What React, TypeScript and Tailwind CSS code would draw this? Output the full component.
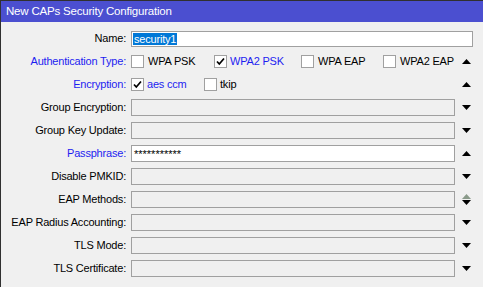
import React from "react";

const font = { fontFamily: '"Liberation Sans", Arial, sans-serif' };

function Up({ grey = false }: { grey?: boolean }) {
  return (
    <svg width="9" height="5" viewBox="0 0 9 5" className="block">
      <polygon points="0,5 9,5 4.5,0" fill={grey ? "#8a9a8a" : "#000"} />
    </svg>
  );
}
function Down() {
  return (
    <svg width="9" height="5" viewBox="0 0 9 5" className="block">
      <polygon points="0,0 9,0 4.5,5" fill="#000" />
    </svg>
  );
}

function Check({ checked }: { checked?: boolean }) {
  return (
    <span className="w-[13px] h-[13px] bg-white border border-[#a0a0a0] flex items-center justify-center shrink-0">
      {checked && (
        <svg width="11" height="11" viewBox="0 0 11 11">
          <path d="M2 5.5 L4.3 8 L9 2.5" stroke="#000" strokeWidth="1.7" fill="none" />
        </svg>
      )}
    </span>
  );
}

function Label({ text, blue }: { text: string; blue?: boolean }) {
  return (
    <div
      className={`w-[126px] shrink-0 text-right pr-[1px] whitespace-nowrap ${blue ? "text-[#1e1ef0]" : "text-black"}`}
    >
      {text}
    </div>
  );
}

function Row({ children }: { children: React.ReactNode }) {
  return <div className="h-[23px] flex items-center">{children}</div>;
}

function Arrow({ kind }: { kind: "up" | "down" | "both" }) {
  return (
    <div className="w-[22px] flex flex-col items-center justify-center">
      {kind === "up" && <Up />}
      {kind === "down" && <Down />}
      {kind === "both" && (
        <div className="flex flex-col gap-[1px]">
          <Up grey />
          <Down />
        </div>
      )}
    </div>
  );
}

function Box({ white, children }: { white?: boolean; children?: React.ReactNode }) {
  return (
    <div
      className={`ml-[4px] w-[324px] h-[17px] border border-[#a0a0a0] flex items-center px-[2px] ${white ? "bg-white" : "bg-[#f0f0f0]"}`}
    >
      {children}
    </div>
  );
}

function FieldRow({ label, blue, arrow, white, children }: { label: string; blue?: boolean; arrow: "up" | "down" | "both"; white?: boolean; children?: React.ReactNode }) {
  return (
    <Row>
      <Label text={label} blue={blue} />
      <Box white={white}>{children}</Box>
      <Arrow kind={arrow} />
    </Row>
  );
}

export default function App() {
  return (
    <div
      className="w-[483px] h-[287px] bg-[#f0f0f0] border-l border-t border-[#303030] text-[11px] tracking-[-0.2px] overflow-hidden"
      style={font}
    >
      <div className="h-[21px] bg-[#4b4fd0] text-white text-[11.5px] flex items-center pl-[5px]">
        New CAPs Security Configuration
      </div>
      <div className="pt-[5px]">
        <Row>
          <Label text="Name:" />
          <div className="ml-[4px] w-[342px] h-[16px] border border-[#a0a0a0] bg-white flex items-center px-[1px]">
            <span className="bg-[#0078d7] text-white leading-[12px] h-[12px] px-[1px]">security1</span>
          </div>
        </Row>
        <Row>
          <Label text="Authentication Type:" blue />
          <div className="ml-[4px] w-[324px] flex items-center">
            <div className="flex items-center w-[83px]">
              <Check />
              <span className="ml-[4px]">WPA PSK</span>
            </div>
            <div className="flex items-center w-[87px]">
              <Check checked />
              <span className="ml-[3px] text-[#1e1ef0]">WPA2 PSK</span>
            </div>
            <div className="flex items-center w-[82px]">
              <Check />
              <span className="ml-[4px]">WPA EAP</span>
            </div>
            <div className="flex items-center">
              <Check />
              <span className="ml-[4px]">WPA2 EAP</span>
            </div>
          </div>
          <Arrow kind="up" />
        </Row>
        <Row>
          <Label text="Encryption:" blue />
          <div className="ml-[4px] w-[324px] flex items-center">
            <div className="flex items-center w-[73px]">
              <Check checked />
              <span className="ml-[3px] text-[#1e1ef0]">aes ccm</span>
            </div>
            <div className="flex items-center">
              <Check />
              <span className="ml-[3px]">tkip</span>
            </div>
          </div>
          <Arrow kind="up" />
        </Row>
        <FieldRow label="Group Encryption:" arrow="down" />
        <FieldRow label="Group Key Update:" arrow="down" />
        <FieldRow label="Passphrase:" blue arrow="up" white>
          <span className="leading-[14px] h-[14px] tracking-[0px]">***********</span>
        </FieldRow>
        <FieldRow label="Disable PMKID:" arrow="down" />
        <FieldRow label="EAP Methods:" arrow="both" />
        <FieldRow label="EAP Radius Accounting:" arrow="down" />
        <FieldRow label="TLS Mode:" arrow="down" />
        <FieldRow label="TLS Certificate:" arrow="down" />
      </div>
    </div>
  );
}
